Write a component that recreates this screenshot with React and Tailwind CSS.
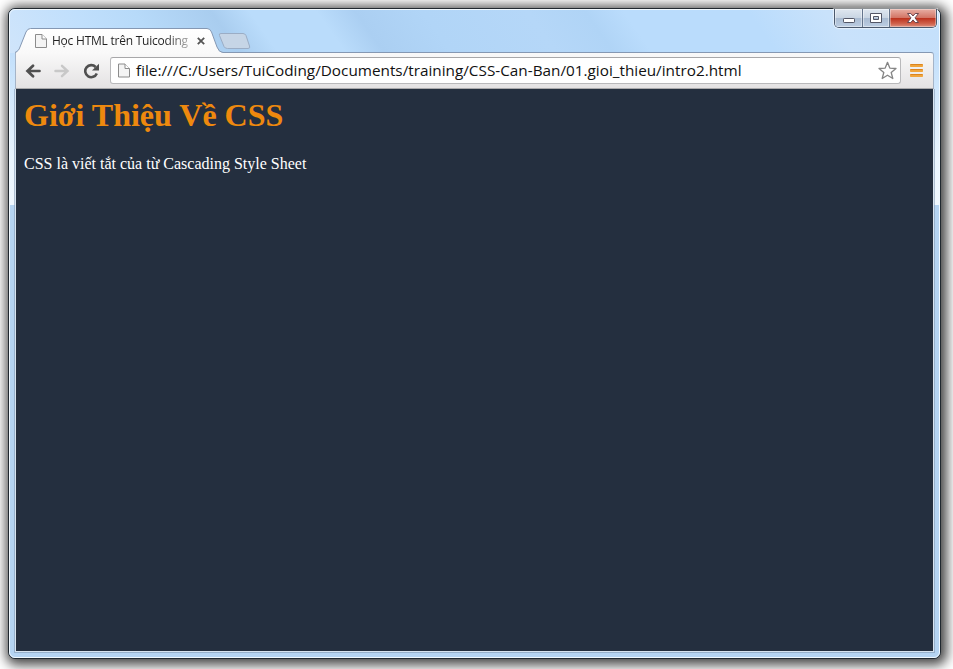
function PageIcon({ className }) {
  return (
    <svg className={className} viewBox="0 0 12 14" fill="none">
      <path d="M.5.5h6.500l4.500 4.500v8.500H.5z" fill="#f4f4f4" stroke="#8c8c8c" />
      <path d="M7 .5V5h4.500" fill="#fff" stroke="#8c8c8c" />
    </svg>
  );
}

function TabShapes() {
  return (
    <svg className="absolute left-0 top-0 h-[25px] w-[240px]" viewBox="0 0 240 25">
      <defs>
        <linearGradient id="tab" x1="0" y1="0" x2="0" y2="1">
          <stop offset="0" stopColor="#ffffff" />
          <stop offset="1" stopColor="#f9f9f9" />
        </linearGradient>
      </defs>
      <path
        d="M0 25C3 24 4 22 5 19L11 4Q12.500 .5 15.500 .5H192Q195 .5 196.500 4L202 19Q204 24.500 208 24.500V25Z"
        fill="url(#tab)"
      />
      <path
        d="M0 24.500C3 23 4 22 5 19L11 4Q12.500 .5 15.500 .5H192Q195 .5 196.500 4L202 19Q204 24.500 208 24.500"
        fill="none"
        stroke="#8598b3"
      />
      <path
        d="M206 5.500H228Q230 5.500 231 7.500L234.500 18Q235.500 20.500 233 20.500H212.500Q210 20.500 209 18.500L204.500 7.500Q203.500 5.500 206 5.500Z"
        fill="#c6d5e6"
        stroke="#9badc5"
      />
    </svg>
  );
}

function WindowButtons() {
  return (
    <div className="flex h-[19px] w-[103px] overflow-hidden rounded-b-[5px] border border-t-0 border-[#4b596d] shadow-[0_0_1px_1px_rgba(255,255,255,0.55)]">
      <div className="flex w-[28px] items-center justify-center border-r border-[#65758c] bg-[linear-gradient(180deg,#dfe7f0_0%,#c9d5e3_48%,#a9bbd1_50%,#bccde2_100%)] shadow-[inset_0_0_0_1px_rgba(255,255,255,0.45)]">
        <svg className="mt-[4px] h-[5px] w-[12px]" viewBox="0 0 12 5">
          <rect x=".5" y=".5" width="11" height="4" rx=".7" fill="#fff" stroke="#535666" />
        </svg>
      </div>
      <div className="flex w-[27px] items-center justify-center border-r border-[#65758c] bg-[linear-gradient(180deg,#dfe7f0_0%,#c9d5e3_48%,#a9bbd1_50%,#bccde2_100%)] shadow-[inset_0_0_0_1px_rgba(255,255,255,0.45)]">
        <svg className="h-[10px] w-[12px]" viewBox="0 0 12 10">
          <path
            d="M.5.5h11v9H.5zM3.500 3.500v3h5v-3z"
            fill="#fff"
            fillRule="evenodd"
            stroke="#535666"
          />
        </svg>
      </div>
      <div className="flex flex-1 items-center justify-center bg-[linear-gradient(180deg,#e8b0a5_0%,#d37565_48%,#bb301b_50%,#cf5f49_80%,#dc9080_100%)] shadow-[inset_0_0_0_1px_rgba(255,255,255,0.35)]">
        <svg className="h-[10px] w-[12px]" viewBox="0 0 12 10">
          <path
            d="M.5.5h3.300L6 3 8.200.5h3.300L8 4.900l3.500 4.600H8.200L6 6.900 3.800 9.500H.5L4 4.900z"
            fill="#fff"
            stroke="#6b4850"
          />
        </svg>
      </div>
    </div>
  );
}

function TitleBar() {
  return (
    <div className="flex h-[42px] justify-between">
      <div className="relative ml-[5px] mt-[18px] h-[25px] w-[240px]">
        <TabShapes />
        <div className="relative flex h-[25px] items-center pl-[20px]">
          <PageIcon className="h-[14px] w-[12px] shrink-0" />
          <span className="ml-[5px] w-[138px] shrink-0 whitespace-nowrap bg-linear-to-r from-[#222] from-82% to-[#bbb] bg-clip-text font-['Open_Sans','Noto_Sans',sans-serif] text-[12px] leading-[20px] tracking-[-0.23px] text-transparent">
            Học HTML trên Tuicoding
          </span>
          <svg className="ml-[7px] mt-[1px] h-[8px] w-[8px]" viewBox="0 0 8 8">
            <path d="M.8.8l6.400 6.400M7.200.8L.8 7.200" stroke="#555" strokeWidth="1.800" />
          </svg>
        </div>
      </div>
      <div className="mr-[2px] -mt-px">
        <WindowButtons />
      </div>
    </div>
  );
}

function Toolbar() {
  return (
    <div className="mx-[5px] flex h-[37px] items-center rounded-tr-[3px] border-x border-t border-b border-x-[#a5b4c8] border-t-[#8598b3] border-b-[#a9a9ab] bg-linear-to-b from-[#f9f9f9] to-[#e4e2e3]">
      <svg className="ml-[9px] h-[14px] w-[16px]" viewBox="0 0 16 14">
        <path d="M14.500 7H3M8 1.800L2.500 7 8 12.200" fill="none" stroke="#505050" strokeWidth="2.700" strokeLinecap="round" />
      </svg>
      <svg className="ml-[13px] h-[14px] w-[16px]" viewBox="0 0 16 14">
        <path d="M1.500 7H13M8 1.800L13.500 7 8 12.200" fill="none" stroke="#c8c8c8" strokeWidth="2.500" strokeLinecap="round" />
      </svg>
      <svg className="ml-[13px] h-[16px] w-[17px]" viewBox="0 0 17 16">
        <path d="M12.600 4A6 6 0 1 0 13.800 10.500" fill="none" stroke="#505050" strokeWidth="2.600" />
        <path d="M16 .8v6.700H9z" fill="#505050" />
      </svg>
      <div className="ml-[10px] flex h-[27px] w-[791px] items-center rounded-[3px] border border-[#b9b9bb] border-t-[#a7a7a9] bg-white pl-[7px] pr-[3px]">
        <PageIcon className="h-[15px] w-[12px]" />
        <span className="-mt-[2px] ml-[6px] flex-1 whitespace-nowrap font-['Open_Sans','Noto_Sans',sans-serif] text-[15.300px] leading-[22px] text-[#111]">
          file:///C:/Users/TuiCoding/Documents/training/CSS-Can-Ban/01.gioi_thieu/intro2.html
        </span>
        <svg className="h-[19px] w-[19px]" viewBox="0 0 19 19">
          <path
            d="M9.500 1.300l2.300 5.800 6.200.4-4.800 4 1.600 6-5.300-3.300-5.300 3.300 1.600-6-4.800-4 6.200-.4z"
            fill="#fff"
            stroke="#858585"
            strokeWidth="1.300"
            strokeLinejoin="round"
          />
        </svg>
      </div>
      <svg className="ml-[9px] h-[13px] w-[13px]" viewBox="0 0 13 13">
        <g fill="#f0a53c">
          <rect width="13" height="3" rx=".8" />
          <rect y="5" width="13" height="3" rx=".8" />
          <rect y="10" width="13" height="3" rx=".8" />
        </g>
        <path d="M.5 .5h12M.5 5.500h12M.5 10.500h12" stroke="#dc851f" />
      </svg>
    </div>
  );
}

export default function App() {
  return (
    <div className="h-[669px] w-[953px] overflow-hidden bg-white pl-[8px] pt-[8px]">
      <div className="h-[651px] w-[933px] rounded-[7px] border border-[#20282f] bg-[#b5d4f2] shadow-[2px_2px_12px_4px_rgba(0,0,0,0.72)]">
        <div className="flex h-full flex-col rounded-[6px] border border-[#f1f9ff] bg-[linear-gradient(55deg,#d0e5fb_0,#c0dffc_10%,#b7daf9_16%,#a9cdef_24%,#badcfb_28%,#badcfb_35%,#abcff2_39%,#b1d5f7_46%,#b5d7f8_57%,#b0d4f6_63%,#badcfc_67%,#badcfc_80%,#c9e2fb_88%,#c4e0fb_100%),linear-gradient(180deg,#c2dffb_42px,#eaf5fe_150px,#f0f8ff_195px)] [background-size:100%_43px,100%_195px] bg-no-repeat">
          <TitleBar />
          <Toolbar />
          <main className="mx-[5px] mb-[5px] flex-1 border border-t-0 border-[#d8e4f0] bg-[#242f3f] px-[8px] pt-[8px] font-['Liberation_Serif',serif] outline-1 outline-[#8499b3]/60 [clip-path:inset(0_-1px_-1px_-1px)]">
            <h1 className="text-[32px] font-bold leading-[37px] text-[#ee890e]">Giới Thiệu Về CSS</h1>
            <p className="mt-[21px] text-[16px] leading-[18px] text-white">
              CSS là viết tắt của từ Cascading Style Sheet
            </p>
          </main>
        </div>
      </div>
    </div>
  );
}
